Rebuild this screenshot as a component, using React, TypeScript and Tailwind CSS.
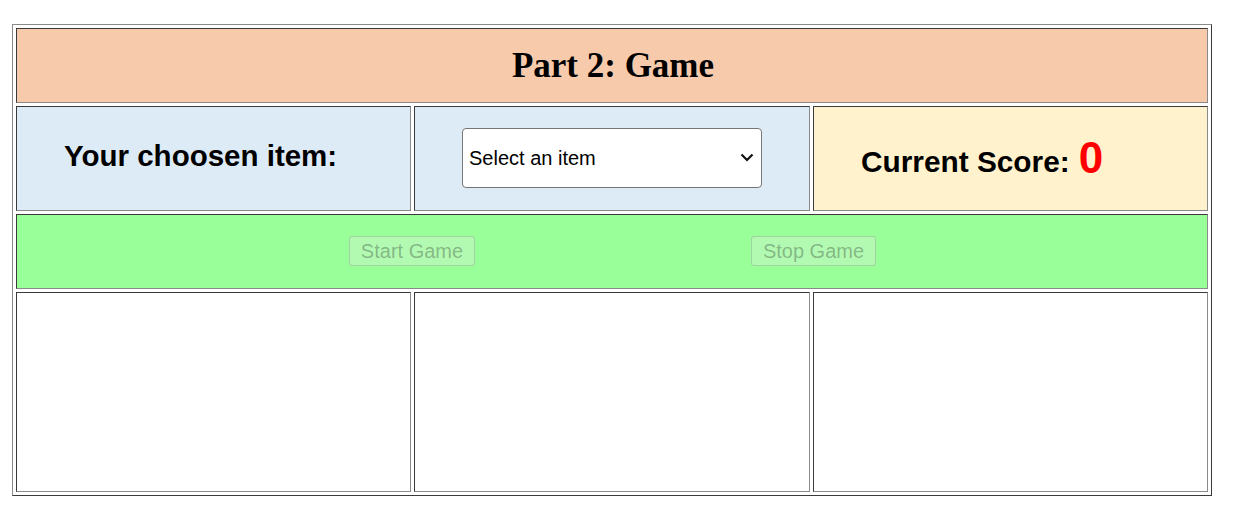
import React from "react";

const cell =
  "border border-t-[#3a3a3a] border-l-[#3a3a3a] border-r-[#8a8a8a] border-b-[#8a8a8a]";

export default function App() {
  return (
    <div className="w-[1256px] h-[529px] bg-white pt-[24px] pl-[12px] font-['Liberation_Sans',Arial,sans-serif]">
      <div className="w-[1200px] h-[472px] border border-t-[#8a8a8a] border-l-[#8a8a8a] border-r-[#3a3a3a] border-b-[#3a3a3a] p-[3px]">
        <div className="grid grid-cols-[395px_396px_395px] grid-rows-[75px_105px_75px_200px] gap-[3px]">
          <div className={`${cell} col-span-3 bg-[#f7caac] flex items-center justify-center`}>
            <h1 className="font-['Liberation_Serif','Times_New_Roman',serif] font-bold text-[35px] leading-none text-black pl-[2px]">
              Part 2: Game
            </h1>
          </div>

          <div className={`${cell} bg-[#ddebf7] flex items-center pl-[47px] pb-[5px]`}>
            <h3 className="font-bold text-[29.5px] leading-none text-black">Your choosen item:</h3>
          </div>

          <div className={`${cell} bg-[#ddebf7] flex items-center justify-center`}>
            <div className="relative w-[300px] h-[60px] -mt-[2px]">
              <select
                defaultValue=""
                className="appearance-none w-full h-full bg-white border border-[#767676] rounded-[4px] pl-[6px] text-[20px] text-black font-['Liberation_Sans',Arial,sans-serif] outline-none"
              >
                <option value="">Select an item</option>
              </select>
              <svg
                className="absolute right-[8px] top-[25px] pointer-events-none"
                width="14"
                height="9"
                viewBox="0 0 14 9"
                fill="none"
              >
                <path d="M1.5 1.5 L7 7 L12.5 1.5" stroke="#111" strokeWidth="2.2" />
              </svg>
            </div>
          </div>

          <div className={`${cell} bg-[#fff2cc] flex items-center pl-[47px] pt-[6px]`}>
            <span className="font-bold text-[29.8px] leading-none text-black">Current Score:</span>
            <span className="font-bold text-[44px] leading-none text-[#ff0000] ml-[9px] -mt-[8px]">0</span>
          </div>

          <div className={`${cell} col-span-3 bg-[#99ff99] flex items-center pl-[332px] pb-[2px] gap-[276px]`}>
            <button
              disabled
              className="w-[126px] h-[30px] rounded-[3px] border border-[rgba(118,118,118,0.3)] bg-[rgba(239,239,239,0.3)] text-[rgba(16,16,16,0.3)] text-[20px] leading-none font-['Liberation_Sans',Arial,sans-serif]"
            >
              Start Game
            </button>
            <button
              disabled
              className="w-[125px] h-[30px] rounded-[3px] border border-[rgba(118,118,118,0.3)] bg-[rgba(239,239,239,0.3)] text-[rgba(16,16,16,0.3)] text-[20px] leading-none font-['Liberation_Sans',Arial,sans-serif]"
            >
              Stop Game
            </button>
          </div>

          <div className={`${cell} bg-white`} />
          <div className={`${cell} bg-white`} />
          <div className={`${cell} bg-white`} />
        </div>
      </div>
    </div>
  );
}
